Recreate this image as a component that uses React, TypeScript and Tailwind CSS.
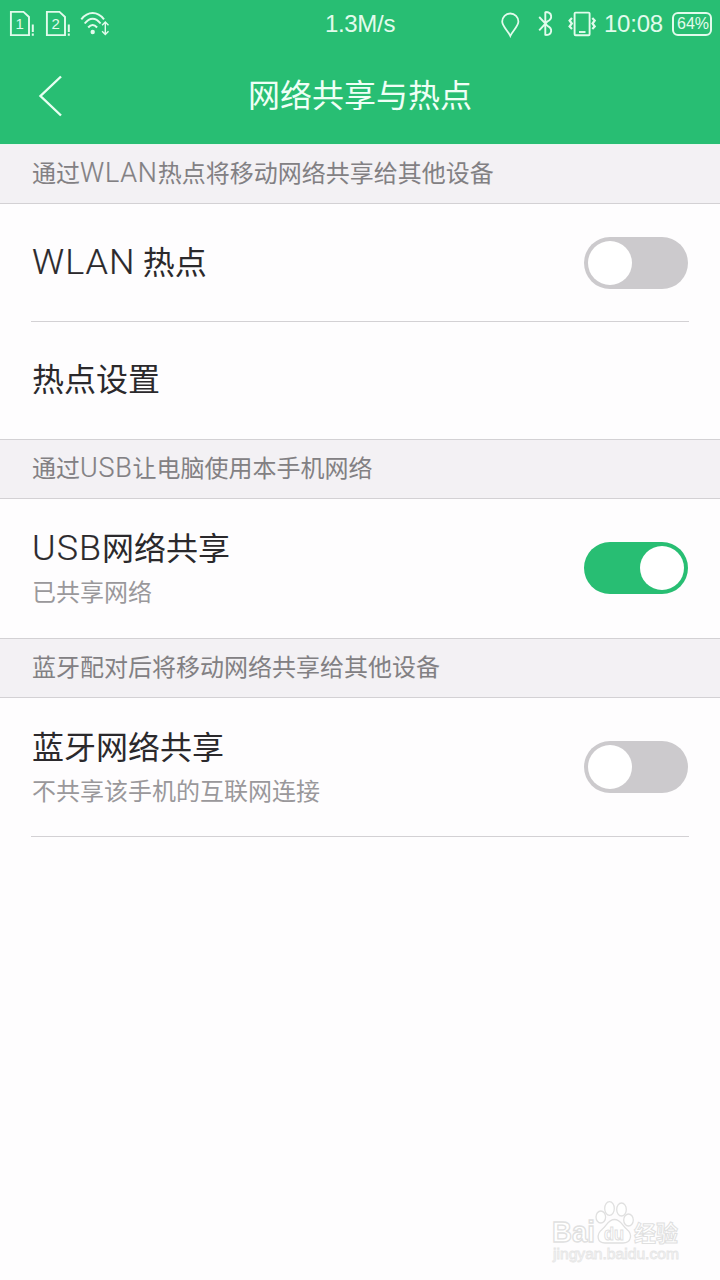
import { ReactNode, useState } from 'react'
import clsx from 'clsx'

interface ToggleProps {
  checked: boolean
  onChange: (next: boolean) => void
  label: string
}

// Roboto latin sits next to the CJK text at a slightly bigger size
function Latin({ children }: { children: ReactNode }) {
  return (
    <span className="font-['Roboto'] text-[1.12em] leading-[0] font-[350] tracking-[0.03em] [-webkit-text-stroke:0.2px]">
      {children}
    </span>
  )
}

function SimIcon({ slot }: { slot: number }) {
  return (
    <svg width="26" height="28" viewBox="0 0 26 28" fill="none" stroke="#e2fbec" strokeWidth="1.9">
      <path d="M1.9 1.9H14.5L20 7V25.1H1.9Z" />
      <path d="M23.8 14.5V22M23.8 23.6V25.8" strokeWidth="2" />
      <text x="10.6" y="19.4" textAnchor="middle" fontSize="15" fill="#e2fbec" stroke="none" fontFamily="Liberation Sans, sans-serif">
        {slot}
      </text>
    </svg>
  )
}

function WifiIcon() {
  return (
    <svg width="30" height="28" viewBox="0 0 30 28" fill="none" stroke="#e2fbec" strokeWidth="2">
      <path d="M1.3 9.3C8 1 17.3 1 24 9.3M4.7 13.5C9.8 7 15.5 7 20.6 13.5M8.2 17.5C11.2 14 14.1 14 17.1 17.5" />
      <circle cx="12.7" cy="22" r="2.2" fill="#e2fbec" stroke="none" />
      <path d="M25.3 12.5V24M22.1 15.2L25.3 12L28.5 15.2M22.1 21.3L25.3 24.5L28.5 21.3" strokeWidth="1.4" />
    </svg>
  )
}

function StatusBar() {
  return (
    <div className="grid h-12 grid-cols-[1fr_auto_1fr] items-center font-['Liberation_Sans',sans-serif] text-2xl leading-none text-[#e2fbec]">
      <div className="flex items-center pl-[9px]">
        <SimIcon slot={1} />
        <div className="ml-[10px]">
          <SimIcon slot={2} />
        </div>
        <div className="ml-[9px]">
          <WifiIcon />
        </div>
      </div>
      <span className="tracking-[-0.3px]">1.3M/s</span>
      <div className="flex items-center justify-end pr-2">
        <svg width="20" height="28" viewBox="0 0 20 28" fill="none" stroke="#e2fbec" strokeWidth="1.8">
          <path d="M10.3 26C8 20.8 2.2 16.3 2.2 11.6A8.1 8.1 0 0 1 18.4 11.6C18.4 16.3 12.6 20.8 10.3 26Z" />
        </svg>
        <svg className="ml-[17px]" width="16" height="28" viewBox="0 0 16 28" fill="none" stroke="#e2fbec" strokeWidth="1.9">
          <path d="M8.3 1.7V25.4M8.3 2C15.7 2 15.7 9 10.5 11.3L2.2 20.3M2.2 7L10.5 15.8C15.7 18.2 15.7 25 8.3 25" />
        </svg>
        <svg className="ml-3.5" width="30" height="28" viewBox="0 0 30 28" fill="none" stroke="#e2fbec" strokeWidth="1.9">
          <rect x="7.6" y="2.6" width="15" height="22.6" rx="1" />
          <path d="M12 22H18.5" />
          <path d="M5 8L2.6 10.5L4.8 13.5L2.6 16.5L5 19M25.3 8L27.7 10.5L25.5 13.5L27.7 16.5L25.3 19" strokeWidth="2.2" />
        </svg>
        <span className="ml-[7px] tracking-[-0.2px]">10:08</span>
        <div className="ml-[9px] flex h-6 w-10 items-center justify-center rounded-md border-2 border-[#e2fbec] pl-0.5 text-base">
          64%
        </div>
      </div>
    </div>
  )
}

function Toggle({ checked, onChange, label }: ToggleProps) {
  return (
    <button
      role="switch"
      aria-checked={checked}
      aria-label={label}
      onClick={() => onChange(!checked)}
      className={clsx(
        'flex h-[52px] w-[104px] items-center rounded-full px-1',
        checked ? 'justify-end bg-[#28be73]' : 'justify-start bg-[#cccacd]'
      )}
    >
      <span className="size-11 rounded-full bg-white" />
    </button>
  )
}

function SectionHeader({ children, first = false }: { children: ReactNode; first?: boolean }) {
  return (
    <div
      className={clsx(
        'flex h-[60px] items-center border-b border-[#d3d1d4] bg-[#f3f1f4] px-8 text-2xl leading-none text-[#828083]',
        first ? 'border-t border-t-[#eaf6ef]' : 'border-t'
      )}
    >
      <div className="pb-[5px] whitespace-nowrap">{children}</div>
    </div>
  )
}

function Watermark() {
  return (
    <svg
      className="absolute right-[38px] bottom-4 h-[66px] w-[132px] overflow-visible"
      viewBox="0 0 132 66"
      fill="#fff"
      stroke="#e0e0e0"
      strokeWidth="1.3"
    >
      <text x="2" y="44" fontSize="29" fontWeight="700" textLength="43" lengthAdjust="spacingAndGlyphs" fontFamily="Liberation Sans, sans-serif">
        Bai
      </text>
      <ellipse cx="50.8" cy="19" rx="4.8" ry="6" />
      <ellipse cx="59.5" cy="10.5" rx="4.8" ry="6.8" />
      <ellipse cx="71.5" cy="11.5" rx="4.8" ry="6.5" />
      <ellipse cx="78.5" cy="22" rx="4.8" ry="6" />
      <path d="M64.5 21.5C71 21.5 72 27.5 77 31.5C83 36.5 81 45 73 45H55C47 45 46 36.5 52 31.5C57 27.5 58 21.5 64.5 21.5Z" />
      <text x="54" y="41.5" fontSize="19" fontWeight="700" strokeWidth="1" textLength="20" lengthAdjust="spacingAndGlyphs" fontFamily="Liberation Sans, sans-serif">
        du
      </text>
      <text x="84" y="42.5" fontSize="22" fontWeight="700" strokeWidth="1" fontFamily="Noto Sans CJK SC, sans-serif">
        经验
      </text>
      <text x="3" y="60.5" fontSize="14" fill="#fcfcfc" stroke="#e6e6e6" strokeWidth="0.8" textLength="126" lengthAdjust="spacingAndGlyphs" fontFamily="Liberation Sans, sans-serif">
        jingyan.baidu.com
      </text>
    </svg>
  )
}

export default function App() {
  const [wlan, setWlan] = useState(false)
  const [usb, setUsb] = useState(true)
  const [bluetooth, setBluetooth] = useState(false)

  return (
    <div className="relative h-[1280px] w-[720px] overflow-hidden bg-[#fefdfe] font-['Noto_Sans_CJK_SC',sans-serif] text-[32px] leading-none font-normal text-[#2b292c]">
      <header className="h-36 bg-[#28be73]">
        <StatusBar />
        <div className="grid h-24 grid-cols-[1fr_auto_1fr] items-center text-[#effff6]">
          <button aria-label="返回" className="ml-9 w-8">
            <svg width="32" height="44" viewBox="0 0 32 44" fill="none" stroke="#e8fff2" strokeWidth="2.4">
              <path d="M25 2.5L4.5 22L25 41.5" />
            </svg>
          </button>
          <h1 className="pb-1.5">网络共享与热点</h1>
        </div>
      </header>

      <SectionHeader first>
        通过<Latin>WLAN</Latin>热点将移动网络共享给其他设备
      </SectionHeader>
      <div className="mx-[31px] flex h-[118px] items-center justify-between border-b border-[#d3d1d4] px-px">
        <div className="pb-1.5">
          <Latin>WLAN</Latin> 热点
        </div>
        <Toggle checked={wlan} onChange={setWlan} label="WLAN 热点" />
      </div>
      <div className="mx-8 flex h-[117px] items-center">
        <div className="pb-2">热点设置</div>
      </div>

      <SectionHeader>
        通过<Latin>USB</Latin>让电脑使用本手机网络
      </SectionHeader>
      <div className="mx-8 flex h-[139px] items-center justify-between pb-px">
        <div className="flex flex-col gap-[17px] pb-1">
          <div className="h-8">
            <Latin>USB</Latin>网络共享
          </div>
          <div className="text-2xl leading-none text-[#9a989b]">已共享网络</div>
        </div>
        <Toggle checked={usb} onChange={setUsb} label="USB网络共享" />
      </div>

      <SectionHeader>蓝牙配对后将移动网络共享给其他设备</SectionHeader>
      <div className="mx-[31px] flex h-[139px] items-center justify-between border-b border-[#d3d1d4] px-px">
        <div className="flex flex-col gap-[17px] pb-1">
          <div className="h-8">蓝牙网络共享</div>
          <div className="text-2xl leading-none text-[#9a989b]">不共享该手机的互联网连接</div>
        </div>
        <Toggle checked={bluetooth} onChange={setBluetooth} label="蓝牙网络共享" />
      </div>

      <Watermark />
    </div>
  )
}
